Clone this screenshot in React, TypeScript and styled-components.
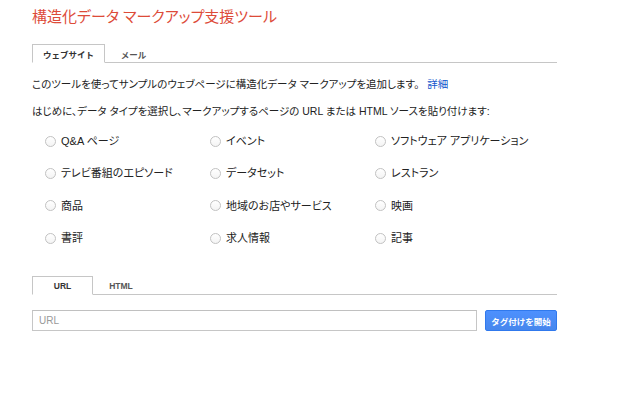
import styled, { createGlobalStyle } from 'styled-components'

const GlobalStyle = createGlobalStyle`
  html, body {
    margin: 0;
    padding: 0;
    background: #fff;
  }
  body {
    font-family: Arial, "Liberation Sans", "Noto Sans CJK JP", sans-serif;
    font-feature-settings: "palt";
    color: #222;
  }
`

type TabItem = {
  label: string
  width: number
}

const siteTabs: TabItem[] = [
  { label: 'ウェブサイト', width: 73 },
  { label: 'メール', width: 57 }
]

const sourceTabs: TabItem[] = [
  { label: 'URL', width: 61 },
  { label: 'HTML', width: 56 }
]

const dataTypes = [
  'Q&A ページ',
  'イベント',
  'ソフトウェア アプリケーション',
  'テレビ番組のエピソード',
  'データセット',
  'レストラン',
  '商品',
  '地域のお店やサービス',
  '映画',
  '書評',
  '求人情報',
  '記事'
]

interface TabBarProps {
  tabs: TabItem[]
  active: number
}

const TabBar = ({ tabs, active }: TabBarProps) => (
  <Tabs>
    {tabs.map((tab, i) => (
      <Tab key={tab.label} $active={i === active} style={{ width: tab.width }}>
        {tab.label}
      </Tab>
    ))}
  </Tabs>
)

const App = () => {
  return (
    <Page>
      <GlobalStyle />
      <Title>構造化データ マークアップ支援ツール</Title>

      <TabBar tabs={siteTabs} active={0} />

      <Intro>
        このツールを使ってサンプルのウェブページに構造化データ マークアップを追加します。
        <Link href="#">詳細</Link>
      </Intro>
      <Intro>はじめに、データ タイプを選択し、マークアップするページの URL または HTML ソースを貼り付けます:</Intro>

      <TypeGrid>
        {dataTypes.map((type) => (
          <Option key={type}>
            <Radio type="radio" name="dataType" />
            <span>{type}</span>
          </Option>
        ))}
      </TypeGrid>

      <TabBar tabs={sourceTabs} active={0} />

      <SourceRow>
        <UrlInput placeholder="URL" />
        <StartButton>タグ付けを開始</StartButton>
      </SourceRow>
    </Page>
  )
}

const Page = styled.div`
  width: 525px;
  padding: 6px 0 0 32px;
`

const Title = styled.h1`
  margin: 0 0 16px;
  font-size: 15px;
  line-height: 22px;
  font-weight: normal;
  color: #dd4b39;
`

const Tabs = styled.div`
  display: flex;
  align-items: flex-start;
  height: 18px;
  border-bottom: 1px solid #c6c6c6;
`

const Tab = styled.div<{ $active: boolean }>`
  box-sizing: border-box;
  height: 19px;
  display: flex;
  align-items: center;
  justify-content: center;
  font-size: 8.5px;
  font-weight: bold;
  font-feature-settings: normal;
  color: ${(p) => (p.$active ? '#333' : '#555')};
  background: ${(p) => (p.$active ? '#fff' : 'transparent')};
  border: 1px solid ${(p) => (p.$active ? '#c6c6c6' : 'transparent')};
  border-bottom: ${(p) => (p.$active ? '1px solid #fff' : 'none')};
`

const Intro = styled.p`
  margin: 15px 0 0;
  font-size: 10.5px;
  line-height: 12px;
  color: #222;
`

const Link = styled.a`
  margin-left: 8px;
  color: #1155cc;
  text-decoration: none;
`

const TypeGrid = styled.div`
  display: grid;
  grid-template-columns: repeat(3, 165px);
  grid-auto-rows: 32.3px;
  margin: 7px 0 23px 13px;
`

const Option = styled.label`
  display: flex;
  align-items: center;
  gap: 5px;
  font-size: 11px;
  color: #222;
`

const Radio = styled.input`
  appearance: none;
  margin: 2px 0 0;
  width: 11px;
  height: 11px;
  border: 1px solid #c2c2c2;
  border-radius: 50%;
  background: linear-gradient(#fff, #f4f4f4);
  box-sizing: border-box;
`

const SourceRow = styled.div`
  display: flex;
  gap: 8px;
  margin-top: 15px;
`

const UrlInput = styled.input`
  box-sizing: border-box;
  width: 445px;
  height: 21px;
  margin: 0;
  padding: 0 6px;
  border: 1px solid #c6c6c6;
  border-top-color: #c0c0c0;
  font-family: Arial, "Liberation Sans", sans-serif;
  font-size: 10px;
  color: #222;
  outline: none;
  &::placeholder {
    color: #999;
  }
`

const StartButton = styled.button`
  box-sizing: border-box;
  width: 72px;
  height: 21px;
  padding: 0;
  border: 1px solid #3079ed;
  border-radius: 2px;
  background: linear-gradient(#4d90fe, #4787ed);
  color: #fff;
  font-family: Arial, "Liberation Sans", "Noto Sans CJK JP", sans-serif;
  font-size: 8.5px;
  font-weight: bold;
`

export default App
